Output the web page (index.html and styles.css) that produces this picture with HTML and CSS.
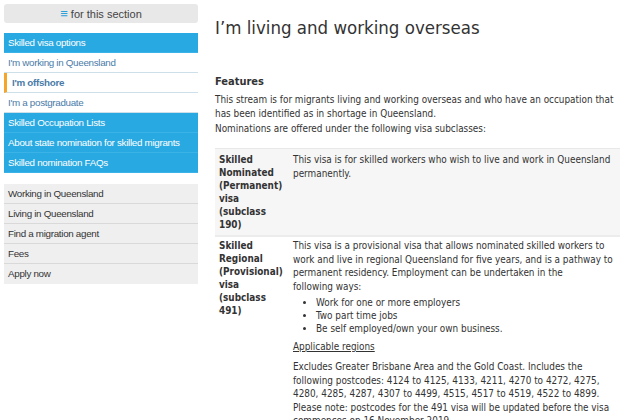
FILE: index.html
```html
<!DOCTYPE html>
<html>
<head>
<meta charset="utf-8">
<link rel="stylesheet" href="styles.css">
</head>
<body>
<div class="page">
  <aside class="sidebar">
    <div class="section-btn"><span class="burger">&#8801;</span> for this section</div>
    <ul class="nav">
      <li class="blue">Skilled visa options</li>
      <li class="sub">I'm working in Queensland</li>
      <li class="sub active">I'm offshore</li>
      <li class="sub">I'm a postgraduate</li>
      <li class="blue">Skilled Occupation Lists</li>
      <li class="blue">About state nomination for skilled migrants</li>
      <li class="blue">Skilled nomination FAQs</li>
    </ul>
    <ul class="nav2">
      <li>Working in Queensland</li>
      <li>Living in Queensland</li>
      <li>Find a migration agent</li>
      <li>Fees</li>
      <li>Apply now</li>
    </ul>
  </aside>
  <main class="content">
    <h1>I’m living and working overseas</h1>
    <h2>Features</h2>
    <p>This stream is for migrants living and working overseas and who have an occupation that has been identified as in shortage in Queensland.</p>
    <p>Nominations are offered under the following visa subclasses:</p>
    <table class="visa">
      <tr class="odd">
        <th>Skilled Nominated (Permanent) visa (subclass 190)</th>
        <td>This visa is for skilled workers who wish to live and work in Queensland permanently.</td>
      </tr>
      <tr class="even">
        <th>Skilled Regional (Provisional) visa (subclass 491)</th>
        <td>This visa is a provisional visa that allows nominated skilled workers to work and live in regional Queensland for five years, and is a pathway to permanent residency. Employment can be undertaken in the<br>following ways:
          <ul>
            <li>Work for one or more employers</li>
            <li>Two part time jobs</li>
            <li>Be self employed/own your own business.</li>
          </ul>
          <p class="link">Applicable regions</p>
          <p>Excludes Greater Brisbane Area and the Gold Coast. Includes the following postcodes: 4124 to 4125, 4133, 4211, 4270 to 4272, 4275, 4280, 4285, 4287, 4307 to 4499, 4515, 4517 to 4519, 4522 to 4899. Please note: postcodes for the 491 visa will be updated before the visa commences on 16 November 2019.</p>
        </td>
      </tr>
    </table>
  </main>
</div>
</body>
</html>
```

FILE: styles.css
```css
html, body {
  margin: 0;
  padding: 0;
  background: #fff;
}
.page {
  display: flex;
  padding: 4px 0 0 4px;
  gap: 17px;
}
.sidebar {
  width: 194px;
  flex: none;
  font-family: "Liberation Sans", Arial, sans-serif;
  font-size: 9.8px;
  letter-spacing: -0.3px;
}
.section-btn {
  height: 19px;
  line-height: 19px;
  background: #e8e8e8;
  border-radius: 3px;
  text-align: center;
  color: #444;
  font-size: 11px;
  letter-spacing: 0;
}
.burger {
  color: #2a9fd8;
  font-size: 13px;
}
.nav, .nav2 {
  list-style: none;
  margin: 0;
  padding: 0;
}
.nav {
  margin-top: 10px;
}
.nav li {
  height: 20px;
  line-height: 20px;
  padding-left: 4px;
  box-sizing: border-box;
  white-space: nowrap;
}
.nav li.blue {
  background: #29a9e1;
  color: #fff;
  border-bottom: 1px solid #3bb3e6;
}
.nav li.sub {
  color: #4a7ba8;
  border-bottom: 1px solid #cddfe8;
}
.nav li.active {
  border-left: 3px solid #f5a52a;
  padding-left: 5px;
  font-weight: bold;
}
.nav2 {
  margin-top: 11px;
  background: #efefef;
}
.nav2 li {
  height: 20px;
  line-height: 20px;
  padding-left: 4px;
  color: #333;
  border-bottom: 1px solid #d9d9d9;
  box-sizing: border-box;
}
.nav2 li:last-child {
  border-bottom: none;
}
.content {
  width: 405px;
  font-family: "DejaVu Sans Condensed", "DejaVu Sans", Verdana, sans-serif;
  font-stretch: condensed;
  font-size: 9.9px;
  color: #333;
  line-height: 14px;
}
h1 {
  font-weight: normal;
  font-size: 18.5px;
  margin: 12px 0 0 0;
  line-height: 24px;
  color: #333;
}
h2 {
  font-size: 11px;
  margin: 34px 0 3px 0;
  line-height: 16px;
}
p {
  margin: 0 0 1px 0;
}
.visa {
  border-collapse: collapse;
  width: 100%;
  margin-top: 12px;
  border-top: 1px solid #e8e8e8;
}
.visa tr.odd {
  background: #f6f6f6;
}
.visa tr {
  border-bottom: 2px solid #ececec;
}
.visa th {
  text-align: left;
  vertical-align: top;
  width: 68px;
  padding: 4px 4px 4px 4px;
  font-weight: bold;
  line-height: 13px;
}
.visa td {
  vertical-align: top;
  padding: 4px 0 4px 2px;
  line-height: 13.6px;
}
.visa tr.even th,
.visa tr.even td {
  padding-top: 2px;
}
.visa ul {
  margin: 3px 0 5px 0;
  padding-left: 23px;
  list-style: disc;
}
.visa ul li {
  line-height: 13px;
}
.link {
  text-decoration: underline;
  margin: 0 0 6px 0;
}
```
